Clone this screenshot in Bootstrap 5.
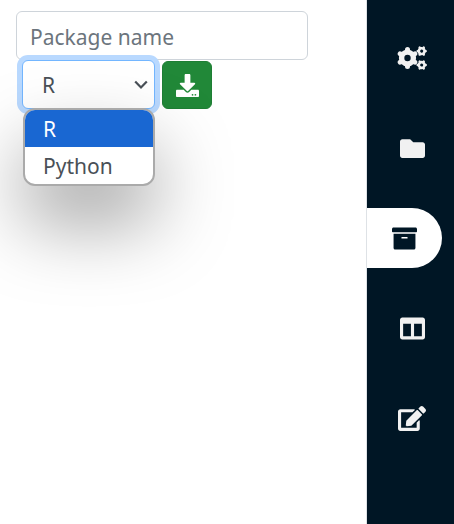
<!DOCTYPE html>
<html lang="en">
<head>
<meta charset="utf-8">
<meta name="viewport" content="width=device-width, initial-scale=1">
<title>Packages</title>
<link href="https://cdn.jsdelivr.net/npm/bootstrap@5.3.0/dist/css/bootstrap.min.css" rel="stylesheet">
<style>
  :root { --navy: #001625; --ink: #495057; }
  body { font-family: "Noto Sans", "Open Sans", sans-serif; font-size: 21px; line-height: 33px; color: var(--ink); background: #fff; }
  .form-area { padding: 11px 58px 0 16px; }
  .package-name { height: 49px; padding: 6px 13px 4px; font-size: 21px; line-height: 33px; border-color: #ced4da; border-radius: 6px; }
  .package-name::placeholder { color: #6c757d; }
  .picker { padding-left: 6px; gap: 7px; }
  .language { width: 133px; height: 49px; padding: 6px 32px 4px 19px; font-size: 21px; line-height: 33px; color: var(--ink);
    border-color: #73b6ff; border-radius: 6px; box-shadow: 0 0 0 5px #b9d9ff; background-image: none; }
  .language:focus { border-color: #73b6ff; box-shadow: 0 0 0 5px #b9d9ff; }
  .chevron { right: 7px; top: 18px; z-index: 1; pointer-events: none; }
  .options { top: 48px; left: 1px; right: 0; z-index: 2; border: 2px solid #aaa; border-radius: 12px; overflow: hidden;
    box-shadow: 0 38px 76px 0 rgba(0, 0, 0, .36); }
  .options li { padding: 3px 18px 1px; height: 37px; }
  .options li[aria-selected="true"] { background: #1967d2; color: #fff; }
  .btn-install { width: 50px; height: 48px; background: #218838; border-color: #1e7e34; border-radius: 6px; color: #fff; }
  .side { width: 88px; padding-top: 28px; gap: 30px; background: var(--navy); border-left: 1px solid #dee2e6; }
  .side a { height: 60px; color: #f1f1f1; margin-right: -3px; }
  .side a.current { margin-right: 12px; background: #fff; color: var(--navy); border-radius: 0 30px 30px 0; }
  svg { fill: currentColor; display: block; }
</style>
<script src="https://cdn.jsdelivr.net/npm/bootstrap@5.3.0/dist/js/bootstrap.bundle.min.js"></script>
</head>
<body>
<div class="d-flex min-vh-100 overflow-hidden">
  <main class="flex-grow-1">
    <form class="form-area">
      <input id="pkg" type="text" class="form-control package-name" placeholder="Package name" aria-label="Package name">
      <div class="picker d-flex align-items-end">
        <div class="position-relative">
          <select id="lang" class="form-select language" aria-label="Language">
            <option selected>R</option>
            <option>Python</option>
          </select>
          <svg class="chevron position-absolute" width="14" height="14" viewBox="0 0 14 14" aria-hidden="true"><path d="M1.2 3.5 7 9.5l5.800-6" fill="none" stroke="#495057" stroke-width="2.200"/></svg>
          <ul class="options list-unstyled m-0 position-absolute bg-white" role="listbox" aria-label="Language options">
            <li role="option" aria-selected="true">R</li>
            <li role="option" aria-selected="false">Python</li>
          </ul>
        </div>
        <button type="button" class="btn btn-install p-0 d-flex align-items-center justify-content-center" aria-label="Install package">
          <svg width="23" height="23" viewBox="0 0 512 512" aria-hidden="true"><path d="M216 0h80c13.300 0 24 10.700 24 24v168h87.700c17.800 0 26.700 21.500 14.100 34.100L269.700 378.300c-7.500 7.500-19.800 7.500-27.300 0L90.100 226.100c-12.600-12.600-3.700-34.100 14.100-34.100H192V24c0-13.300 10.700-24 24-24zm296 376v112c0 13.300-10.700 24-24 24H24c-13.300 0-24-10.700-24-24V376c0-13.300 10.700-24 24-24h146.700l49 49c20.100 20.100 52.500 20.100 72.600 0l49-49H488c13.300 0 24 10.700 24 24zm-124 88c0-11-9-20-20-20s-20 9-20 20 9 20 20 20 20-9 20-20zm64 0c0-11-9-20-20-20s-20 9-20 20 9 20 20 20 20-9 20-20z"/></svg>
        </button>
      </div>
    </form>
  </main>
  <nav class="side d-flex flex-column flex-shrink-0" aria-label="Tools">
    <a href="#settings" class="d-flex align-items-center justify-content-center" aria-label="Settings">
      <svg width="30" height="24" viewBox="0 0 30 24" aria-hidden="true">
        <defs>
          <g id="gear">
            <circle r="8.600"/>
            <path d="M0-8.400V8.400M-7.300-4.200 7.300 4.200M-7.300 4.200 7.300-4.200" stroke="currentColor" stroke-width="5" stroke-linecap="round"/>
            <circle r="3.200" fill="#001625"/>
          </g>
        </defs>
        <use href="#gear" x="10.500" y="12"/>
        <use href="#gear" transform="translate(24.700 5.100) rotate(30) scale(.48)"/>
        <use href="#gear" transform="translate(24.700 19) rotate(30) scale(.48)"/>
      </svg>
    </a>
    <a href="#files" class="d-flex align-items-center justify-content-center" aria-label="Files">
      <svg width="25" height="25" viewBox="0 0 512 512" aria-hidden="true"><path d="M464 128H272l-64-64H48C21.490 64 0 85.490 0 112v288c0 26.510 21.490 48 48 48h416c26.510 0 48-21.490 48-48V176c0-26.510-21.490-48-48-48z"/></svg>
    </a>
    <a href="#packages" class="current d-flex align-items-center justify-content-center" aria-label="Packages" aria-current="page">
      <svg width="25" height="25" viewBox="0 0 512 512" aria-hidden="true"><path d="M32 448c0 17.700 14.300 32 32 32h384c17.700 0 32-14.300 32-32V160H32v288zm160-212c0-6.600 5.400-12 12-12h104c6.600 0 12 5.400 12 12v8c0 6.600-5.400 12-12 12H204c-6.600 0-12-5.400-12-12v-8zM480 32H32C14.300 32 0 46.300 0 64v48c0 8.800 7.200 16 16 16h480c8.800 0 16-7.200 16-16V64c0-17.700-14.300-32-32-32z"/></svg>
    </a>
    <a href="#layout" class="d-flex align-items-center justify-content-center" aria-label="Layout">
      <svg width="25" height="25" viewBox="0 0 512 512" aria-hidden="true"><path d="M464 32H48C21.490 32 0 53.490 0 80v352c0 26.510 21.490 48 48 48h416c26.510 0 48-21.490 48-48V80c0-26.510-21.490-48-48-48zM224 416H64V160h160v256zm224 0H288V160h160v256z"/></svg>
    </a>
    <a href="#edit" class="d-flex align-items-center justify-content-center" aria-label="Edit">
      <svg width="28" height="25" viewBox="0 0 576 512" aria-hidden="true"><path d="M402.600 83.200l90.200 90.200c3.800 3.800 3.800 10 0 13.800L274.400 405.600l-92.800 10.300c-12.400 1.400-22.900-9.100-21.500-21.500l10.300-92.800L388.800 83.200c3.800-3.800 10-3.800 13.800 0zm162-22.900l-48.800-48.800c-15.200-15.200-39.900-15.200-55.200 0l-35.400 35.400c-3.800 3.800-3.800 10 0 13.800l90.200 90.200c3.800 3.800 10 3.800 13.800 0l35.400-35.400c15.200-15.300 15.200-40 0-55.200zM384 346.200V448H64V128h229.800c3.200 0 6.200-1.300 8.500-3.500l40-40c7.600-7.600 2.200-20.500-8.500-20.500H48C21.500 64 0 85.500 0 112v352c0 26.500 21.500 48 48 48h352c26.500 0 48-21.500 48-48V306.200c0-10.700-12.900-16-20.500-8.500l-40 40c-2.200 2.300-3.500 5.300-3.500 8.500z"/></svg>
    </a>
  </nav>
</div>
</body>
</html>
